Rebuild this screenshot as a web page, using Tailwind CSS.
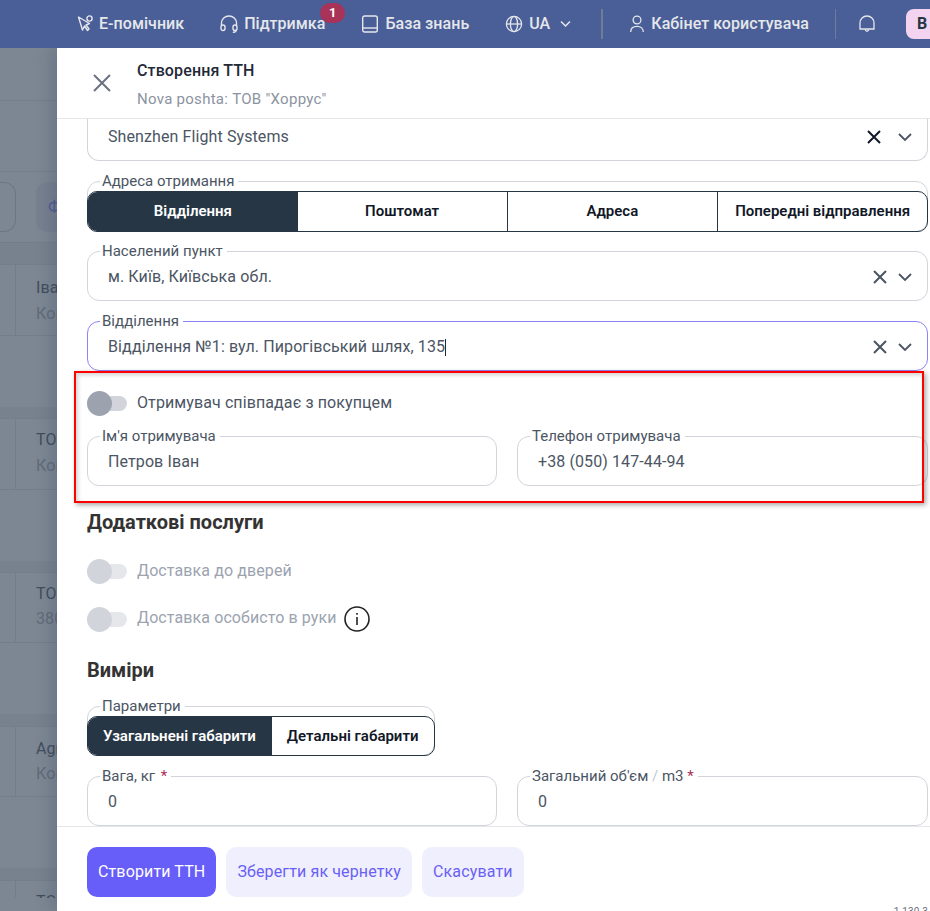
<!DOCTYPE html>
<html lang="uk">
  <head>
    <meta charset="UTF-8" />
    <meta name="viewport" content="width=device-width, initial-scale=1" />
    <title>Створення ТТН</title>
    <script src="https://cdn.jsdelivr.net/npm/@tailwindcss/browser@4"></script>
  </head>
  <body class="bg-white">
    <div class="relative flex h-[911px] w-[930px] flex-col overflow-hidden tracking-[0.1px] [font-family:Roboto,sans-serif]">
      <!-- top nav -->
      <header class="relative z-20 flex h-12 shrink-0 items-center whitespace-nowrap bg-[#4a5f97] pl-[77px] text-base font-medium tracking-[0.05px] text-[#e5e7eb]">
        <a class="flex shrink-0 items-center gap-[4px]">
          <svg class="h-[18px] w-[18px]" viewBox="0 0 18 18" fill="none" stroke="currentColor" stroke-width="1.4" stroke-linejoin="round">
            <path d="M1.5 2 L5.5 15 L7.5 11 L10.5 15.5 L12 14 L9 10 L12.5 8.5 Z" />
            <circle cx="12.5" cy="3.5" r="2.6" />
          </svg>
          <span>Е-помічник</span>
        </a>
        <a class="relative ml-9 flex shrink-0 items-center gap-[6px]">
          <svg class="h-[18px] w-[18px]" viewBox="0 0 18 18" fill="none" stroke="currentColor" stroke-width="1.4" stroke-linecap="round">
            <path d="M1.5 10 V8 a7.5 7 0 0 1 15 0 v2" />
            <rect x="1" y="10" width="4" height="5.5" rx="2" />
            <rect x="13" y="10" width="4" height="5.5" rx="2" />
            <path d="M16 15.5 q0 1.5 -2.5 1.8" />
          </svg>
          <span>Підтримка</span>
          <span class="absolute left-[100px] top-[-9px] flex h-5 w-[25px] items-center justify-center rounded-full bg-[#a83258] text-[13px] font-bold text-white">1</span>
        </a>
        <a class="ml-[37px] flex shrink-0 items-center gap-[7px]">
          <svg class="h-[18px] w-4" viewBox="0 0 16 18" fill="none" stroke="currentColor" stroke-width="1.4">
            <rect x="0.7" y="1" width="14.6" height="16" rx="2" />
            <path d="M0.7 13 H15.3" />
          </svg>
          <span>База знань</span>
        </a>
        <a class="ml-9 flex shrink-0 items-center">
          <svg class="h-[18px] w-[18px]" viewBox="0 0 18 18" fill="none" stroke="currentColor" stroke-width="1.3">
            <circle cx="9" cy="9" r="7.6" />
            <ellipse cx="9" cy="9" rx="3.6" ry="7.6" />
            <path d="M1.4 9 H16.6" />
          </svg>
          <span class="ml-[6px]">UA</span>
          <svg class="ml-[10px] h-[8px] w-[11px]" viewBox="0 0 11 8" fill="none" stroke="currentColor" stroke-width="1.5">
            <path d="M1 1.5 L5.5 6 L10 1.5" />
          </svg>
        </a>
        <span class="ml-[30px] h-[30px] w-[2px] shrink-0 bg-[#6f7d96]"></span>
        <a class="ml-[27px] flex shrink-0 items-center gap-[7px]">
          <svg class="h-[18px] w-[14px]" viewBox="0 0 14 18" fill="none" stroke="currentColor" stroke-width="1.3">
            <circle cx="7" cy="5" r="3.9" />
            <path d="M0.7 17 C0.7 13.5 3 11.4 7 11.4 C11 11.4 13.3 13.5 13.3 17" />
          </svg>
          <span>Кабінет користувача</span>
        </a>
        <span class="ml-[26px] h-[30px] w-px shrink-0 bg-[#6f7d96]"></span>
        <svg class="ml-[23px] h-[18px] w-4 shrink-0" viewBox="0 0 16 18" fill="none" stroke="currentColor" stroke-width="1.3">
          <path d="M1 14 V8 a7 7 0 0 1 14 0 v6 Z" />
          <path d="M6 14.5 q2 3.5 4 0" />
        </svg>
        <span class="ml-[31px] flex h-[30px] w-10 shrink-0 items-center rounded-l-lg bg-[#f3d4f0] pl-[11px] font-bold text-[#263645]">B</span>
      </header>

      <div class="flex min-h-0 flex-1">
        <!-- page behind the overlay -->
        <aside class="w-[57px] shrink-0 overflow-hidden whitespace-nowrap bg-[#7c8793] text-base text-[#414c5c]">
          <div class="h-[53px] border-b border-[#737e8a]"></div>
          <div class="h-[71px] border-b border-[#737e8a]"></div>
          <div class="flex h-[71px] items-center border-b border-[#737e8a]">
            <div class="h-[50px] w-[16px] shrink-0 rounded-r-xl border border-l-0 border-[#6c7784]"></div>
            <div class="ml-[20px] flex h-[50px] w-10 shrink-0 items-center rounded-l-xl bg-[#76808f] pl-3 text-[#4d5a94]">Ф</div>
          </div>
          <div class="h-[21px] bg-[#77828e]"></div>
          <div class="flex h-[72px] border-y border-[#737e8a]">
            <div class="w-[16px] shrink-0 border-r border-[#737e8a]"></div>
            <div class="pl-5 pt-[11px]"><p>Іван</p><p class="mt-[2px] text-[#5f6b79]">Контакт</p></div>
          </div>
          <div class="h-[71px]"></div>
          <div class="h-[11px] bg-[#77828e]"></div>
          <div class="flex h-[72px] border-y border-[#737e8a]">
            <div class="w-[16px] shrink-0 border-r border-[#737e8a]"></div>
            <div class="pl-5 pt-[9px]"><p>ТОВ</p><p class="mt-[2px] text-[#5f6b79]">Контакт</p></div>
          </div>
          <div class="h-[71px]"></div>
          <div class="h-[11px] bg-[#77828e]"></div>
          <div class="flex h-[71px] border-y border-[#737e8a]">
            <div class="w-[16px] shrink-0 border-r border-[#737e8a]"></div>
            <div class="pl-5 pt-[9px]"><p>ТОВ</p><p class="mt-[1px] text-[#5f6b79]">380</p></div>
          </div>
          <div class="h-[71px]"></div>
          <div class="h-[12px] bg-[#77828e]"></div>
          <div class="flex h-[71px] border-y border-[#737e8a]">
            <div class="w-[16px] shrink-0 border-r border-[#737e8a]"></div>
            <div class="pl-5 pt-[10px]"><p>Agro</p><p class="mt-[1px] text-[#5f6b79]">Контакт</p></div>
          </div>
          <div class="h-[71px]"></div>
          <div class="h-[12px] bg-[#77828e]"></div>
          <div class="flex h-[18px] overflow-hidden border-t border-[#737e8a]">
            <div class="w-[16px] shrink-0 border-r border-[#737e8a]"></div>
            <div class="pl-5 pt-[9px]"><p>ТОВ</p></div>
          </div>
        </aside>

        <!-- drawer -->
        <section class="z-10 flex min-w-0 flex-1 flex-col bg-white shadow-[-6px_0_14px_rgba(60,70,100,0.25)]">
          <div class="flex h-[71px] shrink-0 items-center border-b border-[#e5e7eb] pl-[35px]">
            <svg class="h-[20px] w-[20px] text-[#6b7280]" viewBox="0 0 20 20" fill="none" stroke="currentColor" stroke-width="2">
              <path d="M2 2 L18 18 M18 2 L2 18" />
            </svg>
            <div class="ml-[25px] pt-[3px]">
              <h2 class="text-base leading-5 font-medium tracking-[0.13px] text-[#1f2937]">Створення ТТН</h2>
              <p class="mt-2 text-[15px] leading-5 tracking-[0.28px] text-[#8b939f]">Nova poshta: ТОВ "Хоррус"</p>
            </div>
          </div>

          <div class="h-[707px] shrink-0 overflow-hidden pl-[30px] pr-[2px] text-base text-[#4b5563]">
            <!-- scrolled part of the supplier field -->
            <div class="flex h-[42px] items-center rounded-b-xl border-x border-b border-[#d1d5db] pb-[6px] pl-5">
              <span class="flex-1">Shenzhen Flight Systems</span>
              <svg class="h-[14px] w-[14px] text-[#111827]" viewBox="0 0 14 14" fill="none" stroke="currentColor" stroke-width="2"><path d="M1 1 L13 13 M13 1 L1 13" /></svg>
              <svg class="ml-[17px] mr-[15px] h-[8px] w-[14px]" viewBox="0 0 14 8" fill="none" stroke="currentColor" stroke-width="1.8"><path d="M1 1 L7 7 L13 1" /></svg>
            </div>

            <fieldset class="mt-[10px] rounded-xl border border-[#d1d5db]">
              <legend class="ml-3 pl-[2px] pr-1 text-[15px] leading-5 tracking-normal">Адреса отримання</legend>
              <div class="-mx-px -mb-px grid grid-cols-4 overflow-hidden rounded-[10px] border border-[#263645] text-[15px] font-semibold tracking-normal text-[#111827]">
                <button class="h-[39px] bg-[#263645] text-white">Відділення</button>
                <button class="h-[39px] border-r border-[#263645]">Поштомат</button>
                <button class="h-[39px]">Адреса</button>
                <button class="h-[39px] border-l border-[#263645]">Попередні відправлення</button>
              </div>
            </fieldset>

            <fieldset class="mt-[9px] rounded-xl border border-[#d1d5db]">
              <legend class="ml-3 pl-[2px] pr-1 text-[15px] leading-5 tracking-normal">Населений пункт</legend>
              <div class="flex h-[39px] items-center pb-[7px] pl-5">
                <span class="flex-1">м. Київ, Київська обл.</span>
                <svg class="h-[14px] w-[14px]" viewBox="0 0 14 14" fill="none" stroke="currentColor" stroke-width="2"><path d="M1 1 L13 13 M13 1 L1 13" /></svg>
                <svg class="ml-[11px] mr-[15px] h-[8px] w-[14px]" viewBox="0 0 14 8" fill="none" stroke="currentColor" stroke-width="1.8"><path d="M1 1 L7 7 L13 1" /></svg>
              </div>
            </fieldset>

            <fieldset class="mt-[10px] rounded-xl border border-[#8b84f5]">
              <legend class="ml-3 pl-[2px] pr-1 text-[15px] leading-5 tracking-normal">Відділення</legend>
              <div class="flex h-[39px] items-center pb-[7px] pl-5">
                <span>Відділення №1: вул. Пирогівський шлях, 135</span>
                <span class="h-[17px] w-px bg-[#1f2937]"></span>
                <span class="flex-1"></span>
                <svg class="h-[14px] w-[14px]" viewBox="0 0 14 14" fill="none" stroke="currentColor" stroke-width="2"><path d="M1 1 L13 13 M13 1 L1 13" /></svg>
                <svg class="ml-[11px] mr-[15px] h-[8px] w-[14px]" viewBox="0 0 14 8" fill="none" stroke="currentColor" stroke-width="1.8"><path d="M1 1 L7 7 L13 1" /></svg>
              </div>
            </fieldset>

            <div class="mt-5 flex items-center">
              <span class="relative flex h-[25px] w-10 items-center">
                <span class="h-[15px] w-10 rounded-full bg-[#d1d5db]"></span>
                <span class="absolute left-0 top-0 h-[25px] w-[25px] rounded-full bg-[#9ca3af]"></span>
              </span>
              <span class="ml-[10px] -mt-[2px]">Отримувач співпадає з покупцем</span>
            </div>

            <div class="mt-[10px] grid grid-cols-[410px_1fr] gap-5">
              <fieldset class="rounded-xl border border-[#d1d5db]">
                <legend class="ml-3 pl-[2px] pr-1 text-[15px] leading-5 tracking-normal">Ім'я отримувача</legend>
                <div class="flex h-[39px] items-center pb-[7px] pl-5">Петров Іван</div>
              </fieldset>
              <fieldset class="rounded-xl border border-[#d1d5db]">
                <legend class="ml-3 pl-[2px] pr-1 text-[15px] leading-5 tracking-normal">Телефон отримувача</legend>
                <div class="flex h-[39px] items-center pb-[7px] pl-5">+38 (050) 147-44-94</div>
              </fieldset>
            </div>

            <h3 class="mt-[22px] text-[20px] leading-7 font-bold tracking-normal text-[#333333]">Додаткові послуги</h3>

            <div class="mt-[23px] flex items-center text-[#9ca3af]">
              <span class="relative flex h-[25px] w-10 items-center">
                <span class="h-[15px] w-10 rounded-full bg-[#e5e7eb]"></span>
                <span class="absolute left-0 top-0 h-[25px] w-[25px] rounded-full bg-[#d1d5db]"></span>
              </span>
              <span class="ml-[10px] -mt-[2px]">Доставка до дверей</span>
            </div>

            <div class="mt-[22px] flex items-center text-[#9ca3af]">
              <span class="relative flex h-[25px] w-10 items-center">
                <span class="h-[15px] w-10 rounded-full bg-[#e5e7eb]"></span>
                <span class="absolute left-0 top-0 h-[25px] w-[25px] rounded-full bg-[#d1d5db]"></span>
              </span>
              <span class="ml-[10px] -mt-[3px]">Доставка особисто в руки</span>
              <svg class="ml-[7px] h-[26px] w-[26px] text-[#222222]" viewBox="0 0 26 26" fill="none" stroke="currentColor" stroke-width="1.6">
                <circle cx="13" cy="13" r="12" />
                <path d="M13 11 V19" />
                <path d="M13 7 V8.8" />
              </svg>
            </div>

            <h3 class="mt-[24px] text-[20px] leading-7 font-bold tracking-normal text-[#333333]">Виміри</h3>

            <fieldset class="mt-3 w-fit rounded-xl border border-[#d1d5db]">
              <legend class="ml-3 pl-[2px] pr-1 text-[15px] leading-5 tracking-normal">Параметри</legend>
              <div class="-mx-px -mb-px flex overflow-hidden rounded-[10px] border border-[#263645] text-[15px] font-semibold tracking-normal text-[#111827]">
                <button class="h-[38px] bg-[#263645] pl-[15px] pr-4 text-white">Узагальнені габарити</button>
                <button class="h-[38px] px-[15px]">Детальні габарити</button>
              </div>
            </fieldset>

            <div class="mt-[10px] grid grid-cols-[410px_1fr] gap-5">
              <fieldset class="rounded-xl border border-[#d1d5db]">
                <legend class="ml-3 pl-[2px] pr-1 text-[15px] leading-5 tracking-normal">Вага, кг <span class="ml-[2px] text-[#a83258]">*</span></legend>
                <div class="flex h-[39px] items-center pb-[7px] pl-5">0</div>
              </fieldset>
              <fieldset class="rounded-xl border border-[#d1d5db]">
                <legend class="ml-3 pl-[2px] pr-1 text-[15px] leading-5 tracking-normal">Загальний об'єм <span class="text-[#c4c8ce]">/</span> m3 <span class="text-[#a83258]">*</span></legend>
                <div class="flex h-[39px] items-center pb-[7px] pl-5">0</div>
              </fieldset>
            </div>
          </div>

          <footer class="relative flex flex-1 gap-[10px] border-t border-[#e5e7eb] pl-[30px] pt-5 text-base tracking-[0.13px]">
            <button class="h-[50px] rounded-[10px] bg-[#675df8] px-[11px] text-white">Створити ТТН</button>
            <button class="h-[50px] rounded-[10px] bg-[#f0effd] px-[11px] text-[#6a5ff5]">Зберегти як чернетку</button>
            <button class="h-[50px] rounded-[10px] bg-[#f0effd] px-[11px] text-[#6a5ff5]">Скасувати</button>
            <span class="absolute bottom-[-9px] right-[2px] text-[10px] leading-4 text-[#6b7280]">1.130.3</span>
          </footer>
        </section>
      </div>

      <!-- red annotation frame from the screenshot -->
      <div class="absolute left-[74px] top-[371px] z-30 h-[132px] w-[850px] border-2 border-[#ff0000] shadow-[2px_2px_5px_rgba(0,0,0,0.35),inset_2px_2px_4px_rgba(0,0,0,0.18)]"></div>
    </div>
  </body>
</html>
